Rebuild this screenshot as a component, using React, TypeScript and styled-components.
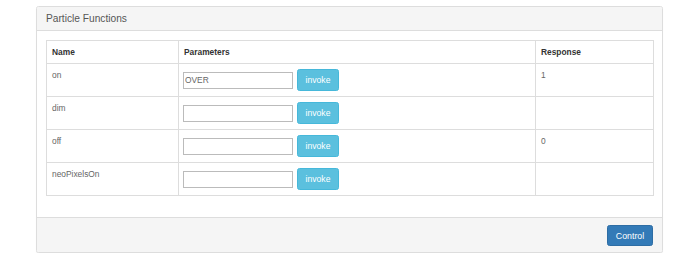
import styled, { createGlobalStyle } from 'styled-components'

const GlobalStyle = createGlobalStyle`
    body{
        margin: 0;
        background: #fff;
        font-family: "Liberation Sans", Arial, sans-serif;
        font-size: 8.4px;
        color: #333;
    }
`

const functions = [
    { name: 'on', param: 'OVER', response: '1' },
    { name: 'dim', param: '', response: '' },
    { name: 'off', param: '', response: '0' },
    { name: 'neoPixelsOn', param: '', response: '' },
]

const App = () => {
  return (
    <Page>
        <GlobalStyle />
        <Panel>
            <Heading>Particle Functions</Heading>

            <Body>
                <Table>
                    <colgroup>
                        <col style={{ width: 132 }} />
                        <col style={{ width: 357 }} />
                        <col style={{ width: 118 }} />
                    </colgroup>
                    <thead>
                        <tr>
                            <Th>Name</Th>
                            <Th>Parameters</Th>
                            <Th>Response</Th>
                        </tr>
                    </thead>
                    <tbody>
                        {functions.map((fn) => (
                            <tr key={fn.name}>
                                <Td>{fn.name}</Td>
                                <Td>
                                    <InvokeForm>
                                        <ParamInput defaultValue={fn.param} />
                                        <InvokeButton>invoke</InvokeButton>
                                    </InvokeForm>
                                </Td>
                                <Td>{fn.response}</Td>
                            </tr>
                        ))}
                    </tbody>
                </Table>
            </Body>

            <Footer>
                <ControlButton>Control</ControlButton>
            </Footer>
        </Panel>
    </Page>
  )
}

export default App

const Page = styled.div`
    padding: 6px 17px 0 36px;
`

const Panel = styled.div`
    border: 1px solid #ddd;
    border-radius: 2.5px;
    background: #fff;
    box-shadow: 0 1px 1px rgba(0, 0, 0, 0.05);
`

const Heading = styled.div`
    background: #f5f5f5;
    border-bottom: 1px solid #ddd;
    border-radius: 2px 2px 0 0;
    padding: 6px 9px;
    font-size: 10.2px;
    line-height: 11px;
    color: #555;
`

const Body = styled.div`
    padding: 9px;
`

const Table = styled.table`
    width: 607px;
    border-collapse: collapse;
    table-layout: fixed;
    margin-bottom: 12px;
    border: 1px solid #ddd;
`

const Th = styled.th`
    text-align: left;
    font-weight: bold;
    color: #333;
    padding: 5px 5px 5px;
    line-height: 12px;
    border: 1px solid #ddd;
`

const Td = styled.td`
    vertical-align: top;
    padding: 5px 5px 5px 5px;
    height: 21px;
    line-height: 12px;
    color: #666;
    border: 1px solid #ddd;
`

const InvokeForm = styled.div`
    display: flex;
    align-items: center;
    gap: 4px;
    margin-left: -1px;
`

const ParamInput = styled.input`
    box-sizing: border-box;
    width: 110px;
    height: 17px;
    margin: 0;
    padding: 0 1px;
    border: 1px solid #bbb;
    font-family: inherit;
    font-size: 8.4px;
    color: #666;
    outline: none;
`

const InvokeButton = styled.button`
    box-sizing: border-box;
    width: 42px;
    height: 22px;
    padding: 0;
    border: 1px solid #46b8da;
    border-radius: 2.5px;
    background: #5bc0de;
    color: #fff;
    font-family: inherit;
    font-size: 8.6px;
`

const Footer = styled.div`
    display: flex;
    justify-content: flex-end;
    background: #f5f5f5;
    border-top: 1px solid #ddd;
    border-radius: 0 0 2px 2px;
    padding: 7px 9px 6px;
`

const ControlButton = styled.button`
    box-sizing: border-box;
    width: 46px;
    height: 21px;
    padding: 0;
    border: 1px solid #2e6da4;
    border-radius: 2.5px;
    background: #337ab7;
    color: #fff;
    font-family: inherit;
    font-size: 8.8px;
`
